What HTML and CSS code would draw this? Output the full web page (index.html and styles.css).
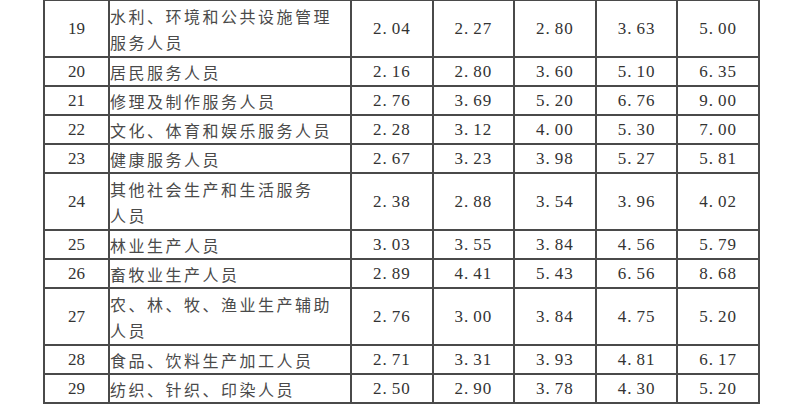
FILE: index.html
```html
<!DOCTYPE html>
<html lang="zh-CN">
<head>
<meta charset="utf-8">
<title>职业收入表</title>
<link rel="stylesheet" href="styles.css">
</head>
<body>
<table class="grid">
  <colgroup>
    <col class="c-no"><col class="c-name"><col class="c-v"><col class="c-v"><col class="c-v"><col class="c-v"><col class="c-v">
  </colgroup>
  <tbody>
    <tr class="double"><td class="no">19</td><td class="name">水利、环境和公共设施管理<br>服务人员</td><td class="v">2<span class="dot">.</span>04</td><td class="v">2<span class="dot">.</span>27</td><td class="v">2<span class="dot">.</span>80</td><td class="v">3<span class="dot">.</span>63</td><td class="v">5<span class="dot">.</span>00</td></tr>
    <tr class="single"><td class="no">20</td><td class="name">居民服务人员</td><td class="v">2<span class="dot">.</span>16</td><td class="v">2<span class="dot">.</span>80</td><td class="v">3<span class="dot">.</span>60</td><td class="v">5<span class="dot">.</span>10</td><td class="v">6<span class="dot">.</span>35</td></tr>
    <tr class="single"><td class="no">21</td><td class="name">修理及制作服务人员</td><td class="v">2<span class="dot">.</span>76</td><td class="v">3<span class="dot">.</span>69</td><td class="v">5<span class="dot">.</span>20</td><td class="v">6<span class="dot">.</span>76</td><td class="v">9<span class="dot">.</span>00</td></tr>
    <tr class="single"><td class="no">22</td><td class="name">文化、体育和娱乐服务人员</td><td class="v">2<span class="dot">.</span>28</td><td class="v">3<span class="dot">.</span>12</td><td class="v">4<span class="dot">.</span>00</td><td class="v">5<span class="dot">.</span>30</td><td class="v">7<span class="dot">.</span>00</td></tr>
    <tr class="single"><td class="no">23</td><td class="name">健康服务人员</td><td class="v">2<span class="dot">.</span>67</td><td class="v">3<span class="dot">.</span>23</td><td class="v">3<span class="dot">.</span>98</td><td class="v">5<span class="dot">.</span>27</td><td class="v">5<span class="dot">.</span>81</td></tr>
    <tr class="double"><td class="no">24</td><td class="name">其他社会生产和生活服务<br>人员</td><td class="v">2<span class="dot">.</span>38</td><td class="v">2<span class="dot">.</span>88</td><td class="v">3<span class="dot">.</span>54</td><td class="v">3<span class="dot">.</span>96</td><td class="v">4<span class="dot">.</span>02</td></tr>
    <tr class="single"><td class="no">25</td><td class="name">林业生产人员</td><td class="v">3<span class="dot">.</span>03</td><td class="v">3<span class="dot">.</span>55</td><td class="v">3<span class="dot">.</span>84</td><td class="v">4<span class="dot">.</span>56</td><td class="v">5<span class="dot">.</span>79</td></tr>
    <tr class="single"><td class="no">26</td><td class="name">畜牧业生产人员</td><td class="v">2<span class="dot">.</span>89</td><td class="v">4<span class="dot">.</span>41</td><td class="v">5<span class="dot">.</span>43</td><td class="v">6<span class="dot">.</span>56</td><td class="v">8<span class="dot">.</span>68</td></tr>
    <tr class="double"><td class="no">27</td><td class="name">农、林、牧、渔业生产辅助<br>人员</td><td class="v">2<span class="dot">.</span>76</td><td class="v">3<span class="dot">.</span>00</td><td class="v">3<span class="dot">.</span>84</td><td class="v">4<span class="dot">.</span>75</td><td class="v">5<span class="dot">.</span>20</td></tr>
    <tr class="single"><td class="no">28</td><td class="name">食品、饮料生产加工人员</td><td class="v">2<span class="dot">.</span>71</td><td class="v">3<span class="dot">.</span>31</td><td class="v">3<span class="dot">.</span>93</td><td class="v">4<span class="dot">.</span>81</td><td class="v">6<span class="dot">.</span>17</td></tr>
    <tr class="single"><td class="no">29</td><td class="name">纺织、针织、印染人员</td><td class="v">2<span class="dot">.</span>50</td><td class="v">2<span class="dot">.</span>90</td><td class="v">3<span class="dot">.</span>78</td><td class="v">4<span class="dot">.</span>30</td><td class="v">5<span class="dot">.</span>20</td></tr>
  </tbody>
</table>
</body>
</html>
```

FILE: styles.css
```css
html, body {
  margin: 0;
  padding: 0;
  background: #ffffff;
}

body {
  font-family: "Liberation Serif", "Noto Sans CJK SC", serif;
  color: #333333;
}

.grid {
  border-collapse: collapse;
  table-layout: fixed;
  width: 715px;
  margin: -1px 0 0 43px;
}

.c-no { width: 65px; }
.c-name { width: 242px; }
.c-v { width: 81.6px; }

.grid td {
  border: 2px solid #4a4a4a;
  padding: 0;
  vertical-align: middle;
}

.single { height: 29px; }
.double { height: 57px; }

.no {
  text-align: center;
  font-size: 17px;
  font-family: "Liberation Serif", serif;
  padding-top: 1px;
}

.name {
  text-align: left;
  padding-left: 13px;
  font-family: "Noto Sans CJK SC", sans-serif;
  font-size: 16px;
  font-weight: 400;
  letter-spacing: 2.5px;
  line-height: 26px;
  white-space: nowrap;
  color: #4a4a4a;
}

.v {
  text-align: center;
  font-size: 17px;
  letter-spacing: 1px;
  font-family: "Liberation Serif", serif;
  padding-top: 1px;
}

.dot {
  margin-right: 4px;
}
```
